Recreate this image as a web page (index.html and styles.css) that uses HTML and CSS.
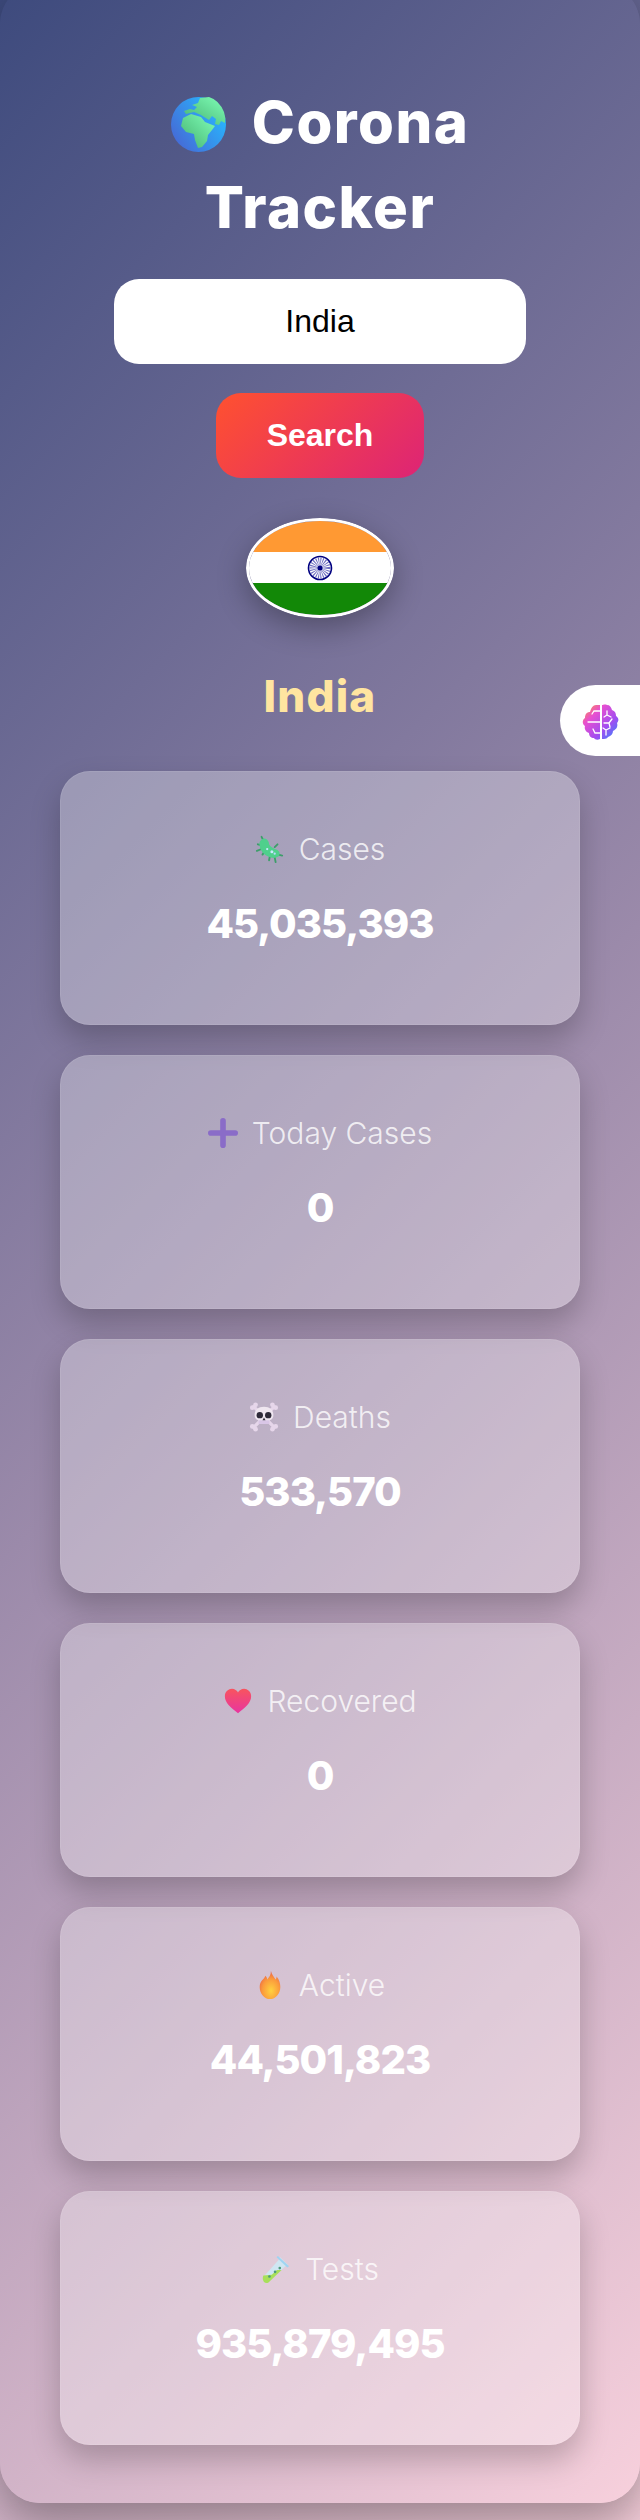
FILE: index.html
```html
<!DOCTYPE html>
<html lang="en">
<head>
<meta charset="utf-8">
<title>Corona Tracker</title>
<link rel="stylesheet" href="styles.css">
</head>
<body>
<main class="app">
  <h1 class="title">
    <svg class="globe" viewBox="0 0 55 55" aria-hidden="true">
      <defs>
        <linearGradient id="sea" x1="0" y1="1" x2="1" y2="0.3"><stop offset="0" stop-color="#4a5fd0"/><stop offset="1" stop-color="#27b8ff"/></linearGradient>
        <linearGradient id="land" x1="0" y1="1" x2="1" y2="0"><stop offset="0" stop-color="#45b06f"/><stop offset="1" stop-color="#7fffb8"/></linearGradient>
      </defs>
      <ellipse cx="27.5" cy="27.5" rx="27.5" ry="27.5" fill="url(#sea)"/>
      <path fill="url(#land)" d="M29 1 L38 0 Q48 3 53 15 Q55 21 54 26 L50 24 L48 28 L44 27 L45 22 L41 19 L38 23 L30 18 L23 15 L15 17 L13 14 L19 12 L23 13 L26 10 L21 8 L27 6 Z"/>
      <path fill="url(#land)" d="M12 21 L20 17 L30 20 L34 25 L39 27 L44 29 L41 33 L37 38 L36 44 L31 50 L27 51 L24 43 L23 37 L15 35 L10 29 Z"/>
    </svg>
    <span>Corona Tracker</span>
  </h1>
  <input class="search-input" type="text" value="India">
  <button class="search-btn" type="button">Search</button>
  <svg class="flag" viewBox="0 0 148 100" aria-hidden="true">
    <defs><clipPath id="oval"><ellipse cx="74" cy="50" rx="71" ry="47"/></clipPath></defs>
    <g clip-path="url(#oval)">
      <rect width="148" height="34" fill="#ff9933"/>
      <rect y="34" width="148" height="31" fill="#fff"/>
      <rect y="65" width="148" height="35" fill="#128807"/>
    </g>
    <ellipse cx="74" cy="50" rx="72.5" ry="48.5" fill="none" stroke="#fff" stroke-width="3"/>
    <circle cx="74" cy="50" r="11.5" fill="#fff" stroke="#000080" stroke-width="1.6"/>
    <circle cx="74" cy="50" r="5.500" fill="none" stroke="#4a4ab0" stroke-width="10" stroke-dasharray=".7 .8" opacity=".8"/>
    <circle cx="74" cy="50" r="2.500" fill="#000080"/>
  </svg>
  <h2 class="country">India</h2>

  <section class="card">
    <div class="label">
      <svg class="ico" viewBox="0 0 32 32" aria-hidden="true">
        <g stroke="#3d9e6a" stroke-width="2" stroke-linecap="round"><path d="M7 3l2 4M3 11l4 1M2 18l5-2M8 22l2-3M15 28l1-5M22 30l-1-5M29 23l-4-1M21 14l3-3"/></g>
        <path fill="#4fd08c" d="M6 7 Q9 3 13 6 Q15 8 15 11 Q17 15 24 17 Q28 20 25 24 Q20 27 14 24 Q6 20 5 13 Q4 9 6 7Z"/>
        <circle cx="18" cy="19" r="1.6" fill="#c8e8ff"/><circle cx="13" cy="16" r="1.2" fill="#c8e8ff"/><circle cx="21" cy="21" r="1.2" fill="#b8d8ff"/>
      </svg>
      <span>Cases</span>
    </div>
    <div class="value">45,035,393</div>
  </section>

  <section class="card">
    <div class="label">
      <svg class="ico" viewBox="0 0 32 32" aria-hidden="true">
        <path d="M16 3v26M3 16h26" stroke="#8a6cc8" stroke-width="6" stroke-linecap="round"/>
      </svg>
      <span>Today Cases</span>
    </div>
    <div class="value">0</div>
  </section>

  <section class="card">
    <div class="label">
      <svg class="ico" viewBox="0 0 32 32" aria-hidden="true">
        <g stroke="#e6d6ea" stroke-width="3.500" stroke-linecap="round"><path d="M5 5l22 22M27 5L5 27"/></g>
        <g fill="#e6d6ea"><circle cx="3.500" cy="6" r="2.500"/><circle cx="7" cy="3" r="2.500"/><circle cx="28.500" cy="6" r="2.500"/><circle cx="25" cy="3" r="2.500"/><circle cx="3.500" cy="26" r="2.500"/><circle cx="7" cy="29" r="2.500"/><circle cx="28.500" cy="26" r="2.500"/><circle cx="25" cy="29" r="2.500"/></g>
        <path fill="#efe6f0" d="M16 5c6 0 10 3.500 10 8.500 0 3-1 5-4 6v4H10v-4c-3-1-4-3-4-6C6 8.500 10 5 16 5z"/>
        <path fill="#d9c6e6" d="M10 19.500h12v4H10z"/>
        <circle cx="11.500" cy="14" r="3.400" fill="#2e2a38"/><circle cx="20.500" cy="14" r="3.400" fill="#2e2a38"/>
        <path fill="#2e2a38" d="M16 16.500l1.600 3h-3.200z"/>
      </svg>
      <span>Deaths</span>
    </div>
    <div class="value">533,570</div>
  </section>

  <section class="card">
    <div class="label">
      <svg class="ico" viewBox="0 0 32 32" aria-hidden="true">
        <defs><linearGradient id="heart" x1="0" y1="0" x2="0" y2="1"><stop offset="0" stop-color="#f8545e"/><stop offset="1" stop-color="#e835a0"/></linearGradient></defs>
        <path fill="url(#heart)" d="M16 29C8 23 2 18 2 11c0-5 4-8 7.500-8 3 0 5.500 2 6.500 4 1-2 3.500-4 6.500-4C26 3 30 6 30 11c0 7-6 12-14 18z"/>
      </svg>
      <span>Recovered</span>
    </div>
    <div class="value">0</div>
  </section>

  <section class="card">
    <div class="label">
      <svg class="ico" viewBox="0 0 32 32" aria-hidden="true">
        <defs><radialGradient id="flame" cx=".55" cy=".7" r=".7"><stop offset="0" stop-color="#ffd23f"/><stop offset=".6" stop-color="#fb9a3c"/><stop offset="1" stop-color="#e8604a"/></radialGradient></defs>
        <path fill="url(#flame)" d="M17 1c1 4 3 6 5 9 1-1 1-2 1-3 3 3 4 8 4 11 0 7-5 13-11 13S5 25 5 18C5 11 10 10 11 6c1 1 2 2 2 4 2-2 4-5 4-9z"/>
      </svg>
      <span>Active</span>
    </div>
    <div class="value">44,501,823</div>
  </section>

  <section class="card">
    <div class="label">
      <svg class="ico" viewBox="0 0 32 32" aria-hidden="true">
        <path fill="#cfe6f2" d="M20 3l9 9-3 1L7 31H5l-3-3v-3L19 6z"/>
        <path fill="#a8df5a" d="M2.500 23l9-1 5.500-5 5 0L8 30.500Q5 32 3 29.500 1 27 2.500 23z"/>
        <path fill="#9fd4f2" d="M18 2l12 11-2 1.500L16.500 3.500z"/>
        <circle cx="9" cy="24" r="1.400" fill="#4d9a7c"/><circle cx="15" cy="19" r="1.400" fill="#4d9a7c"/><circle cx="20" cy="15" r="1.400" fill="#4d9a7c"/>
      </svg>
      <span>Tests</span>
    </div>
    <div class="value">935,879,495</div>
  </section>

  <aside class="brain-pill">
    <svg class="brain" viewBox="0 0 38 38" aria-hidden="true">
      <defs><linearGradient id="brainfill" x1="0" y1="0" x2="1" y2="1"><stop offset="0" stop-color="#ff9b2e"/><stop offset=".3" stop-color="#e84fd0"/><stop offset=".65" stop-color="#a24df0"/><stop offset="1" stop-color="#2a8cff"/></linearGradient></defs>
      <path fill="url(#brainfill)" d="M18 2v34c-2 1-5 1-6-1-3 0-5-2-5-5-3-1-5-4-4-7-3-2-3-6 0-8 0-4 2-6 5-6 1-4 3-7 6-7 2 0 3 0 4 0zM20 2c1 0 3-1 5 0 3 0 4 2 5 5 3 1 4 3 4 6 3 2 3 5 1 7 1 3 0 6-4 8 0 3-2 5-5 6-1 2-4 2-6 2z"/>
      <path fill="none" stroke="#fff" stroke-width="1.300" stroke-linecap="round" d="M18 8h-6l-2 3M18 19H6M18 30h-5l-2-4M25 8l0 4-3 2M25 12l4 2M30 16l-3 4-5 0M27 20l1 4M24 32v-5l-3-2M24 27l4-2"/>
    </svg>
  </aside>
</main>
</body>
</html>
```
FILE: styles.css
```css
* { box-sizing: border-box; }
html, body { margin: 0; padding: 0; }
body {
  width: 640px;
  height: 2520px;
  overflow: hidden;
  background: linear-gradient(135deg, #3d4a7d 0%, #9b8aaa 50%, #f7d0dc 100%);
  font-family: "Inter", "Liberation Sans", sans-serif;
}
.app {
  position: relative;
  width: 640px;
  height: 2519px;
  margin-top: -16px;
  padding: 96px 60px 0;
  display: flex;
  flex-direction: column;
  align-items: center;
  border-radius: 40px;
  background: linear-gradient(135deg, #3d4a7d 0%, #9b8aaa 50%, #f7d0dc 100%);
  box-shadow: 0 20px 50px rgba(0, 0, 0, .35);
}
.title {
  width: 440px;
  margin: 0 0 29px;
  color: #fff;
  font-size: 58px;
  font-weight: 800;
  line-height: 85px;
  text-align: center;
  letter-spacing: 1.5px;
}
.globe {
  width: 55px;
  height: 55px;
  margin-right: 12px;
  vertical-align: -9px;
}
.search-input {
  flex: none;
  width: 412px;
  height: 85px;
  border: 0;
  border-radius: 25px;
  background: #fff;
  color: #000;
  font-family: "Liberation Sans", Arial, sans-serif;
  font-size: 32px;
  text-align: center;
  outline: none;
}
.search-btn {
  flex: none;
  width: 208px;
  height: 85px;
  margin-top: 29px;
  border: 0;
  border-radius: 25px;
  background: linear-gradient(135deg, #ff512f, #dd2476);
  color: #fff;
  font-family: "Liberation Sans", Arial, sans-serif;
  font-size: 32px;
  font-weight: 700;
}
.flag {
  flex: none;
  display: block;
  width: 148px;
  height: 100px;
  margin-top: 40px;
  border-radius: 50%;
  box-shadow: 0 10px 30px rgba(0, 0, 0, .3);
}
.country {
  margin: 51px 0 48px;
  color: #ffe5a0;
  font-size: 44px;
  font-weight: 800;
  line-height: 54px;
  letter-spacing: 1.2px;
}
.card {
  flex: none;
  width: 520px;
  height: 254px;
  margin-bottom: 30px;
  padding-top: 54px;
  border: 1px solid rgba(255, 255, 255, .08);
  border-radius: 30px;
  background: rgba(255, 255, 255, .3);
  box-shadow: 0 15px 30px rgba(0, 0, 0, .22);
  text-align: center;
}
.label {
  display: flex;
  justify-content: center;
  align-items: center;
  gap: 14px;
  height: 46px;
  color: rgba(255, 255, 255, .8);
  font-size: 30px;
  font-weight: 300;
}
.ico {
  width: 30px;
  height: 30px;
  flex: none;
}
.value {
  margin-top: 22px;
  color: #fff;
  font-size: 40px;
  font-weight: 800;
  line-height: 60px;
  letter-spacing: -1px;
}
.brain-pill {
  position: absolute;
  top: 701px;
  right: 0;
  width: 80px;
  height: 71px;
  padding: 18px 0 0 22px;
  border-radius: 36px 0 0 36px;
  background: #fff;
}
.brain {
  display: block;
  width: 38px;
  height: 38px;
}
```
